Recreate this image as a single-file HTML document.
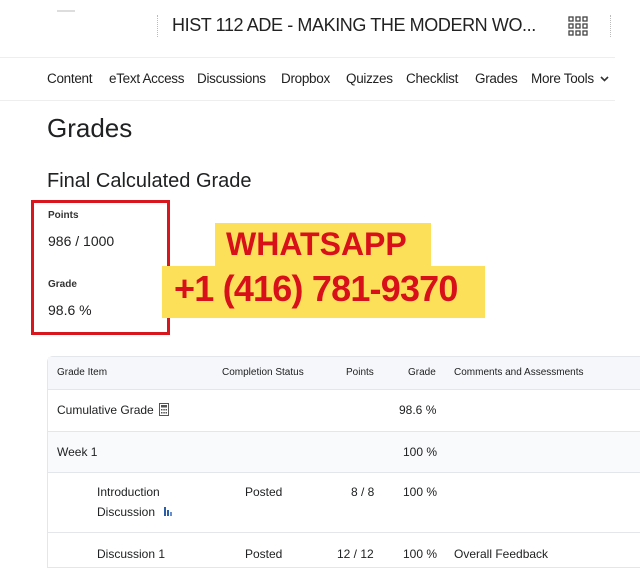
<!DOCTYPE html><html><head><style>
body{margin:0;width:640px;height:557px;overflow:hidden;background:#fff;font-family:"Liberation Sans",sans-serif;color:#202122;position:relative}
.a{position:absolute;white-space:nowrap}
.n{top:71px;font-size:13.5px;color:#222;letter-spacing:-0.3px}
</style></head><body>
<div class="a" style="left:57px;top:10px;width:18px;height:2px;background:#ddd"></div>
<div class="a" style="left:157px;top:15px;height:22px;border-left:1px dotted #bbb"></div>
<div class="a" style="left:172px;top:15px;font-size:18px;color:#222;letter-spacing:-0.4px">HIST 112 ADE - MAKING THE MODERN WO...</div>
<svg class="a" style="left:568px;top:16px" width="20" height="20" viewBox="0 0 20 20" fill="none" stroke="#444" stroke-width="1.3"><rect x="1" y="1" width="4" height="4"/><rect x="8" y="1" width="4" height="4"/><rect x="15" y="1" width="4" height="4"/><rect x="1" y="8" width="4" height="4"/><rect x="8" y="8" width="4" height="4"/><rect x="15" y="8" width="4" height="4"/><rect x="1" y="15" width="4" height="4"/><rect x="8" y="15" width="4" height="4"/><rect x="15" y="15" width="4" height="4"/></svg>
<div class="a" style="left:610px;top:15px;height:22px;border-left:1px dotted #bbb"></div>
<div class="a" style="left:0;top:57px;width:615px;border-top:1px solid #eee"></div>
<div class="a n" style="left:47px">Content</div>
<div class="a n" style="left:109px">eText Access</div>
<div class="a n" style="left:197px">Discussions</div>
<div class="a n" style="left:281px">Dropbox</div>
<div class="a n" style="left:346px">Quizzes</div>
<div class="a n" style="left:406px">Checklist</div>
<div class="a n" style="left:475px">Grades</div>
<div class="a n" style="left:531px">More Tools</div>
<svg class="a" style="left:600px;top:76px" width="9" height="6"><path d="M1 1l3.5 3.5L8 1" fill="none" stroke="#333" stroke-width="1.6"/></svg>
<div class="a" style="left:0;top:100px;width:615px;border-top:1px solid #eee"></div>
<div class="a" style="left:47px;top:113px;font-size:26px">Grades</div>
<div class="a" style="left:47px;top:170px;font-size:20px">Final Calculated Grade</div>
<div class="a" style="left:31px;top:200px;width:133px;height:129px;border:3px solid #d8161d"></div>
<div class="a" style="left:48px;top:210px;font-size:10px;font-weight:bold;color:#333">Points</div>
<div class="a" style="left:48px;top:233px;font-size:14px">986 / 1000</div>
<div class="a" style="left:48px;top:279px;font-size:10px;font-weight:bold;color:#333">Grade</div>
<div class="a" style="left:48px;top:302px;font-size:14px">98.6 %</div>
<div class="a" style="left:215px;top:223px;width:216px;height:44px;background:#fde05a"></div>
<div class="a" style="left:162px;top:266px;width:323px;height:52px;background:#fde05a"></div>
<div class="a" style="left:226px;top:226px;font-size:32px;font-weight:bold;color:#d8101a">WHATSAPP</div>
<div class="a" style="left:174px;top:268px;font-size:36px;font-weight:bold;color:#d8101a;letter-spacing:-0.8px">+1 (416) 781-9370</div>
<div class="a" style="left:47px;top:356px;width:640px;height:210px;border:1px solid #e3e6ea;border-radius:6px 0 0 0"></div>
<div class="a" style="left:48px;top:357px;width:640px;height:32px;background:#f5f7fa;border-bottom:1px solid #e3e6ea"></div>
<div class="a" style="left:48px;top:431px;width:640px;height:40px;background:#f9fafc;border-top:1px solid #e3e6ea;border-bottom:1px solid #e3e6ea"></div>
<div class="a" style="left:48px;top:532px;width:640px;border-top:1px solid #e3e6ea"></div>
<div class="a" style="font-size:10px;top:367px;left:57px">Grade Item</div>
<div class="a" style="font-size:10px;top:367px;left:222px">Completion Status</div>
<div class="a" style="font-size:10px;top:367px;left:346px">Points</div>
<div class="a" style="font-size:10px;top:367px;left:408px">Grade</div>
<div class="a" style="font-size:10px;top:367px;left:454px">Comments and Assessments</div>
<div class="a" style="font-size:12px;top:403px;left:57px">Cumulative Grade</div>
<svg class="a" style="left:159px;top:403px" width="10" height="13" viewBox="0 0 10 13"><rect x="0.5" y="0.5" width="9" height="12" fill="none" stroke="#555"/><rect x="2" y="2" width="6" height="2.5" fill="#555"/><g fill="#555"><rect x="2" y="6" width="1.5" height="1.5"/><rect x="4.3" y="6" width="1.5" height="1.5"/><rect x="6.5" y="6" width="1.5" height="1.5"/><rect x="2" y="9" width="1.5" height="1.5"/><rect x="4.3" y="9" width="1.5" height="1.5"/><rect x="6.5" y="9" width="1.5" height="1.5"/></g></svg>
<div class="a" style="font-size:12px;top:403px;left:399px">98.6 %</div>
<div class="a" style="font-size:12px;top:445px;left:57px">Week 1</div>
<div class="a" style="font-size:12px;top:445px;left:403px">100 %</div>
<div class="a" style="font-size:12px;top:485px;left:97px">Introduction</div>
<div class="a" style="font-size:12px;top:505px;left:97px">Discussion</div>
<svg class="a" style="left:164px;top:507px" width="9" height="9"><rect x="0" y="0" width="2" height="9" fill="#2b5ea8"/><rect x="3" y="3" width="2" height="6" fill="#2b5ea8"/><rect x="6" y="5" width="2" height="4" fill="#6a8fc8"/></svg>
<div class="a" style="font-size:12px;top:485px;left:245px">Posted</div>
<div class="a" style="font-size:12px;top:485px;left:351px">8 / 8</div>
<div class="a" style="font-size:12px;top:485px;left:403px">100 %</div>
<div class="a" style="font-size:12px;top:547px;left:97px">Discussion 1</div>
<div class="a" style="font-size:12px;top:547px;left:245px">Posted</div>
<div class="a" style="font-size:12px;top:547px;left:337px">12 / 12</div>
<div class="a" style="font-size:12px;top:547px;left:403px">100 %</div>
<div class="a" style="font-size:12px;top:547px;left:454px">Overall Feedback</div>
</body></html>
